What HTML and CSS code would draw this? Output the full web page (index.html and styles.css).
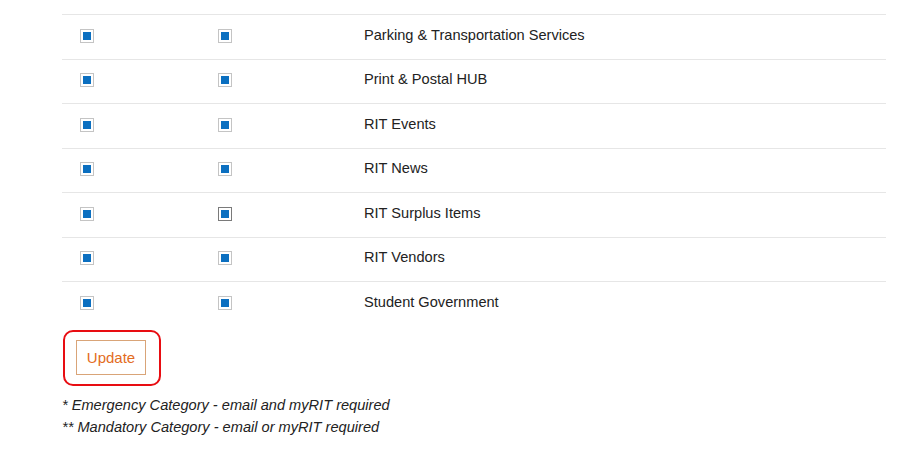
FILE: index.html
```html
<!DOCTYPE html>
<html>
<head>
<meta charset="utf-8">
<link rel="stylesheet" href="styles.css">
</head>
<body>
<div class="page">
  <div class="table">
    <div class="row"><div class="cell"><span class="cb"></span></div><div class="cell"><span class="cb"></span></div><div class="cell label">Parking &amp; Transportation Services</div></div>
    <div class="row"><div class="cell"><span class="cb"></span></div><div class="cell"><span class="cb"></span></div><div class="cell label">Print &amp; Postal HUB</div></div>
    <div class="row"><div class="cell"><span class="cb"></span></div><div class="cell"><span class="cb"></span></div><div class="cell label">RIT Events</div></div>
    <div class="row"><div class="cell"><span class="cb"></span></div><div class="cell"><span class="cb"></span></div><div class="cell label">RIT News</div></div>
    <div class="row"><div class="cell"><span class="cb"></span></div><div class="cell"><span class="cb focus"></span></div><div class="cell label">RIT Surplus Items</div></div>
    <div class="row"><div class="cell"><span class="cb"></span></div><div class="cell"><span class="cb"></span></div><div class="cell label">RIT Vendors</div></div>
    <div class="row"><div class="cell"><span class="cb"></span></div><div class="cell"><span class="cb"></span></div><div class="cell label">Student Government</div></div>
  </div>
  <div class="highlight"><button class="update">Update</button></div>
  <p class="note">* Emergency Category - email and myRIT required</p>
  <p class="note">** Mandatory Category - email or myRIT required</p>
</div>
</body>
</html>
```
FILE: styles.css
```css
html, body { margin: 0; padding: 0; background: #fff; }
body { font-family: "Liberation Sans", Arial, sans-serif; color: #222; }
.page { padding: 14px 14px 0 62px; width: 824px; }
.table { display: flex; flex-direction: column; }
.row {
  display: grid;
  grid-template-columns: 138px 146px 1fr;
  height: 44.5px;
  box-sizing: border-box;
  border-top: 1px solid #e6e6e6;
  align-items: center;
}
.cell { padding-left: 18px; padding-bottom: 2px; display: flex; align-items: center; }
.label { font-size: 14.6px; color: #222; padding-bottom: 4px; }
.cb {
  display: block;
  width: 14px; height: 14px;
  box-sizing: border-box;
  border: 1px solid #c4c4c4;
  padding: 2px;
  background: #0b6fc0;
  background-clip: content-box;
}
.cb.focus { border-color: #7a7a7a; }
.highlight {
  display: inline-flex;
  margin-top: 4px;
  margin-left: 1px;
  width: 98px; height: 56px;
  box-sizing: border-box;
  border: 2px solid #e80d12;
  border-radius: 10px;
  padding: 8px 0 0 11px;
}
.update {
  width: 70px; height: 35px;
  background: #fff;
  border: 1px solid #d9a478;
  color: #e36c1d;
  font-family: "Liberation Sans", Arial, sans-serif;
  font-size: 15px;
  padding: 0;
}
.note {
  margin: 0;
  font-style: italic;
  font-size: 14.6px;
  line-height: 22px;
  color: #222;
}
.note:first-of-type { margin-top: 8px; }
```
